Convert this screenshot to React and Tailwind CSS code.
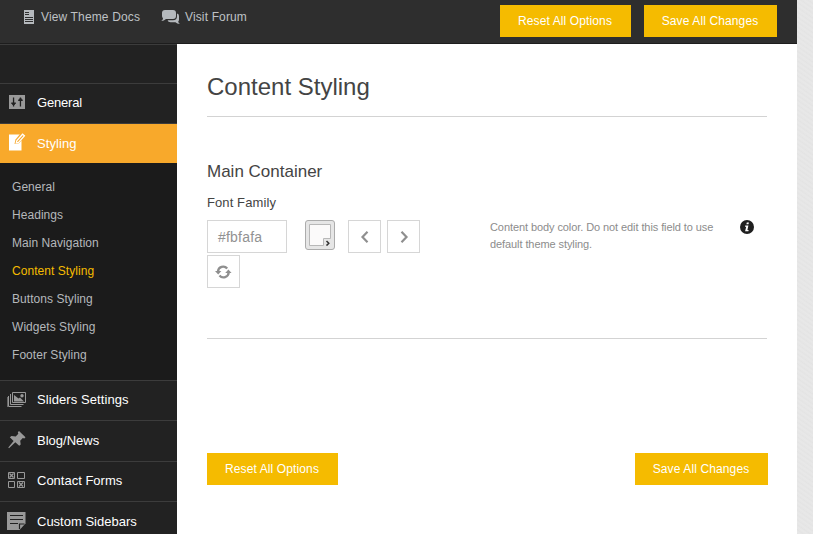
import React from "react";

const FONT = "font-['Liberation_Sans',Arial,sans-serif]";

function DocIcon() {
  return (
    <svg width="10" height="14" viewBox="0 0 10 14" shapeRendering="crispEdges">
      <path fill="#b5b9bd" d="M0 0h10v14H0z" />
      <path fill="#2e2e2e" d="M1 2h4v1H1zM1 4h4v1H1zM1 7h8v1H1zM1 9h8v1H1zM1 11h8v1H1z" />
    </svg>
  );
}

function ChatIcon() {
  return (
    <svg width="20" height="15" viewBox="0 0 20 15" fill="#b5b9bd">
      <path d="M4 0h8q3 0 3 3v3q0 3-3 3H5q-2 2-4.700 2Q2.300 9.500 2 8.200Q1 7.500 1 6V3Q1 0 4 0z" />
      <path d="M16 3.500q2 .3 2 2.500v3.500q0 1.500-.8 2Q17.500 13.200 19 14q-3 0-4.500-1.800H9.500Q7 12.200 6.600 10.200H12q4-.2 4-4z" />
    </svg>
  );
}

function SlidersIcon() {
  return (
    <svg width="16" height="14" viewBox="0 0 16 14">
      <path fill="#999" d="M0 0h16v14H0z" />
      <path fill="#222" d="M3.900 2.500h1.300v9H3.900zM2.300 7.500h4.500v1.500H2.300zM3.200 9h2.700v1H3.200zM10.800 2.500h1.300v9h-1.300zM9.200 4.500h4.500V6H9.200zM10.100 3.500h2.700v1h-2.700z" />
    </svg>
  );
}

function EditIcon() {
  return (
    <svg width="17" height="18" viewBox="0 0 17 18">
      <path fill="#fff" d="M0 1.500h12.500v16H0z" />
      <path fill="#f8a92b" d="M11 1 6.500 6.500 5.500 11l4.500-.8L13 7V1z" />
      <path fill="#f8a92b" stroke="#fff" strokeWidth="1.300" d="M7.800 7.800 13.600 1.200l1.800 1.700-5.900 6.500-2.200.5z" />
    </svg>
  );
}

function ImagesIcon() {
  return (
    <svg width="19" height="16" viewBox="0 0 19 16">
      <path fill="none" stroke="#999" d="M5.500.5h13v10h-13zM3.500 2v10.500h13M1.500 4v10.500h13" />
      <path fill="none" stroke="#999" d="M.5 5v10" strokeWidth=".6" />
      <path fill="#999" d="M7 9.500V3l4.500 3.500 1.500-1 4 4z" />
      <circle cx="15" cy="3.700" r="1.700" fill="#999" />
    </svg>
  );
}

function PinIcon() {
  return (
    <svg width="18" height="18" viewBox="0 0 18 18" fill="#999">
      <path d="M11 0l6.500 6.200-1.200 1.200-1.500-.4-2.600 2.700.5 3.800-1.500 1.300-3.900-3.600L1 17.200l-.7-.6 5.300-6.700L1.800 6.300 3.500 5l4.200.4 2.600-2.700-.5-1.400z" />
    </svg>
  );
}

function FormsIcon() {
  return (
    <svg width="17" height="16" viewBox="0 0 17 16" fill="none" stroke="#999">
      <path d="M.5.5h6v6h-6zM9.500.5h7v6h-7zM.5 9.500h6v6h-6zM9.500 9.500h7v6h-7z" />
      <path d="M1.500 1.500l4 4M5.500 1.500l-4 4M11 10.500l4 4M15 10.500l-4 4" strokeWidth="1.300" />
    </svg>
  );
}

function NoteIcon() {
  return (
    <svg width="19" height="18" viewBox="0 0 19 18">
      <path fill="#999" d="M0 0h18.500v11.500L12.500 18H0z" />
      <path stroke="#222" strokeWidth="1.200" fill="none" d="M3 3.500h13M3 7.500h13M3 11.500h8M12.500 17v-5h5" />
    </svg>
  );
}

function Chevron({ right }) {
  return (
    <svg width="10" height="12" viewBox="0 0 10 12" fill="none" stroke="#8f8f8f" strokeWidth="2.200">
      <path d={right ? "M2.500.8l5 5.200-5 5.200" : "M7.500.8 2.500 6l5 5.200"} />
    </svg>
  );
}

function RefreshIcon() {
  return (
    <svg width="17" height="14" viewBox="0 0 17 14">
      <path fill="none" stroke="#8f8f8f" strokeWidth="2.300" d="M3 6.500a5.200 5.200 0 0 1 9.200-3M13.700 7.500a5.200 5.200 0 0 1-9.200 3" />
      <path fill="#8f8f8f" d="M0 6h6.400L3.200 9.500zM16.600 8h-6.400l3.200-3.500z" />
    </svg>
  );
}

function InfoIcon() {
  return (
    <svg width="14" height="14" viewBox="0 0 14 14">
      <circle cx="7" cy="7" r="7" fill="#1f1f1f" />
      <path fill="#fff" d="M6.800 2.400h2.100l-.4 1.900H6.400zM5.200 5.500h3.200L7.400 10h1.200l-.2 1.200H5.100L6.200 6.700H5z" />
    </svg>
  );
}

function Button({ children, className }) {
  return (
    <button className={`h-8 bg-[#f5bb00] pr-px text-xs tracking-[0.12px] text-white ${className}`}>
      {children}
    </button>
  );
}

function NavItem({ icon, label, className = "" }) {
  return (
    <div className={`flex items-center border-t border-[#3c3c3c] text-[13px] text-white ${className}`}>
      <span className="flex w-[37px] shrink-0 pl-[7px]">{icon}</span>
      <span>{label}</span>
    </div>
  );
}

const SUBMENU = [
  "General",
  "Headings",
  "Main Navigation",
  "Content Styling",
  "Buttons Styling",
  "Widgets Styling",
  "Footer Styling",
];

export default function App() {
  return (
    <div className={`flex h-[534px] w-[813px] overflow-hidden bg-[#e6e6e6] ${FONT}`}>
      <div className="flex w-[797px] flex-col bg-white">
        <header className="flex h-11 shrink-0 border-b border-[#1d1d1d] bg-[#2e2e2e]">
          <div className="flex h-[34px] items-center pl-6 text-xs tracking-[0.14px] text-[#bfc2c5]">
            <DocIcon />
            <span className="ml-[7px] w-[120px]">View Theme Docs</span>
            <ChatIcon />
            <span className="ml-1">Visit Forum</span>
          </div>
          <div className="ml-auto flex gap-[13px] pt-[5px] pr-5">
            <Button className="w-[131px]">Reset All Options</Button>
            <Button className="w-[133px]">Save All Changes</Button>
          </div>
        </header>
        <div className="flex min-h-0 grow">
          <nav className="flex w-[177px] shrink-0 flex-col bg-[#222]">
            <div className="h-[39px] shrink-0 border-t border-[#3c3c3c]" />
            <NavItem className="h-10 shrink-0 pb-px tracking-[-0.18px]" icon={<span className="ml-0.5 pb-[2px]"><SlidersIcon /></span>} label="General" />
            <div className="flex h-10 shrink-0 items-center border-t border-[#3c3c3c] bg-[#f8a92b] bg-clip-padding text-[13px] text-white">
              <span className="flex w-[37px] pb-[3px] pl-[9px]"><EditIcon /></span>
              <span className="tracking-[0.08px]">Styling</span>
            </div>
            <ul className="h-[217px] shrink-0 bg-[#1b1b1b] pt-[10px] pl-3 text-xs tracking-[0.05px] text-[#b5b8bb]">
              {SUBMENU.map((item) => (
                <li
                  key={item}
                  className={`h-7 leading-7 ${item === "Content Styling" ? "text-[#f5bb00]" : ""}`}
                >
                  {item}
                </li>
              ))}
            </ul>
            <NavItem className="h-10 shrink-0 pb-[2px] tracking-[0.08px]" icon={<ImagesIcon />} label="Sliders Settings" />
            <NavItem className="h-[41px] shrink-0" icon={<span className="ml-px pb-[3px]"><PinIcon /></span>} label="Blog/News" />
            <NavItem className="h-10 shrink-0 pb-[2px]" icon={<span className="ml-px pb-px"><FormsIcon /></span>} label="Contact Forms" />
            <NavItem className="h-[41px] shrink-0" icon={<span className="pb-[3px]"><NoteIcon /></span>} label="Custom Sidebars" />
          </nav>
          <main className="grow pt-[28px] pr-[30px] pl-[30px] text-[#444]">
            <h1 className="h-[45px] border-b border-[#d3d3d3] text-2xl leading-[30px]">Content Styling</h1>
            <section className="h-[222px] border-b border-[#d3d3d3] pt-[43px]">
              <h2 className="text-[17px] leading-6">Main Container</h2>
              <div className="mt-[11px] text-[13px] leading-4 tracking-[0.1px]">Font Family</div>
              <div className="mt-[9px] flex">
                <div className="w-[283px]">
                  <div className="flex items-start">
                    <div className="mr-[18px] flex h-[33px] w-20 items-center border border-[#d6d6d6] pl-[10px] text-sm tracking-[0.2px] text-[#929292]">
                      #fbfafa
                    </div>
                    <div className="mr-[13px] flex h-[30px] w-[30px] items-center justify-center rounded-[3px] border border-[#acacac] bg-[#e6e6e6]">
                      <svg width="22" height="22" viewBox="0 0 22 22">
                        <path fill="#fbfafa" stroke="#b8b8b8" d="M.5.500h21v14h-7v7H.5z" />
                        <path fill="none" stroke="#333" strokeWidth="1.500" d="M17.500 17l2.300 2.300-2.300 2.300" />
                      </svg>
                    </div>
                    <div className="mr-[6px] flex h-[33px] w-[33px] items-center justify-center border border-[#d6d6d6]">
                      <Chevron />
                    </div>
                    <div className="flex h-[33px] w-[33px] items-center justify-center border border-[#d6d6d6]">
                      <Chevron right />
                    </div>
                  </div>
                  <div className="mt-[2px] flex h-[33px] w-[33px] items-center justify-center border border-[#d6d6d6]">
                    <RefreshIcon />
                  </div>
                </div>
                <p className="-mt-px w-[250px] text-[11px] leading-[17px] tracking-[-0.085px] text-[#8c8c8c]">
                  Content body color. Do not edit this field to use
                  <br />
                  default theme styling.
                </p>
                <InfoIcon />
              </div>
            </section>
            <div className="mt-[114px] flex justify-between">
              <Button className="w-[131px]">Reset All Options</Button>
              <Button className="-mr-px w-[133px]">Save All Changes</Button>
            </div>
          </main>
        </div>
      </div>
      <div className="grow bg-[repeating-linear-gradient(35deg,#e5e5e5_0px,#e8e8e8_2px,#e3e3e3_4px)]" />
    </div>
  );
}
